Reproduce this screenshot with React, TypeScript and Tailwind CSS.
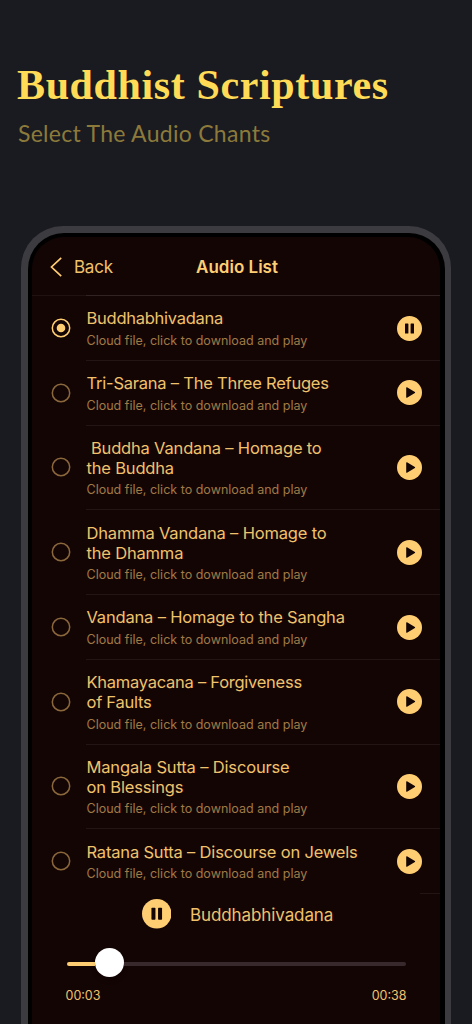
import React, { useState } from "react";

interface Track {
  id: number;
  lines: string[];
  spacing: string;
}

const tracks: Track[] = [
  { id: 1, lines: ["Buddhabhivadana"], spacing: "tracking-[-0.26px]" },
  { id: 2, lines: ["Tri-Sarana – The Three Refuges"], spacing: "tracking-[-0.22px]" },
  { id: 3, lines: ["\u00a0Buddha Vandana – Homage to", "the Buddha"], spacing: "tracking-[-0.18px]" },
  { id: 4, lines: ["Dhamma Vandana – Homage to", "the Dhamma"], spacing: "tracking-[-0.18px]" },
  { id: 5, lines: ["Vandana – Homage to the Sangha"], spacing: "tracking-[-0.18px]" },
  { id: 6, lines: ["Khamayacana – Forgiveness", "of Faults"], spacing: "tracking-[-0.26px]" },
  { id: 7, lines: ["Mangala Sutta – Discourse", "on Blessings"], spacing: "tracking-[-0.16px]" },
  { id: 8, lines: ["Ratana Sutta – Discourse on Jewels"], spacing: "tracking-[-0.18px]" },
];

const PlayIcon = () => (
  <svg viewBox="0 0 25 25" className="h-[25px] w-[25px]">
    <circle cx="12.5" cy="12.5" r="12.5" fill="#ffce73" />
    <path d="M9.2 7.8v9.4c0 .5.4.7.8.5l7.9-4.7c.4-.3.4-.8 0-1L10 7.3c-.4-.2-.8 0-.8.5z" fill="#140505" />
  </svg>
);

const PauseIcon = ({ className }: { className: string }) => (
  <svg viewBox="0 0 25 25" className={className}>
    <circle cx="12.5" cy="12.5" r="12.5" fill="#ffce73" />
    <rect x="8" y="7.5" width="3.4" height="10" rx="0.6" fill="#140505" />
    <rect x="13.6" y="7.5" width="3.4" height="10" rx="0.6" fill="#140505" />
  </svg>
);

const Radio = ({ checked }: { checked: boolean }) => (
  <svg viewBox="0 0 20 20" className="h-5 w-5" fill="none">
    <circle cx="10" cy="10" r="8.7" stroke={checked ? "#ffce73" : "#8a683b"} strokeWidth="1.5" />
    {checked && <circle cx="10" cy="10" r="4.3" fill="#ffce73" />}
  </svg>
);

const App: React.FC = () => {
  const [current, setCurrent] = useState(1);

  return (
    <div className="flex h-[1024px] w-[472px] flex-col overflow-hidden bg-[#1a1b20] font-['Inter',sans-serif]">
      <header className="h-[226px] shrink-0 pl-[17px] pt-[60px]">
        <h1 className="whitespace-nowrap font-['Liberation_Serif',serif] text-[42px] font-bold leading-[50px] tracking-[0.62px] text-[#ffdb56]">
          Buddhist Scriptures
        </h1>
        <p className="ml-px mt-[8px] whitespace-nowrap font-['Lato',sans-serif] text-[23px] leading-[30px] tracking-[0.28px] text-[#8c7a3b]">
          Select The Audio Chants
        </p>
      </header>

      <main className="ml-[21px] h-[798px] w-[430px] shrink-0 rounded-t-[42px] bg-[#3b3b40] px-[6.5px] pt-[6.5px]">
        <div className="h-full rounded-t-[36px] bg-black px-[4.5px] pt-[4.5px]">
          <div className="flex h-full flex-col overflow-hidden rounded-t-[32px] bg-[#140505]">
            <nav className="grid h-[58px] shrink-0 grid-cols-[1fr_auto_1fr] items-center pt-[2px] text-[17px] text-[#ffce73]">
              <button className="flex items-center gap-[11px] pl-[17px] text-[#f0c26c]">
                <svg viewBox="0 0 14 20" className="h-5 w-[14px]" fill="none" stroke="#ffce73" strokeWidth="1.7">
                  <path d="M12.2 .9 2.5 10l9.7 9.1" />
                </svg>
                <span className="pt-px tracking-[-0.25px]">Back</span>
              </button>
              <h2 className="pl-[2px] pt-px font-semibold tracking-[0px]">Audio List</h2>
            </nav>

            <ul className="h-[598px] shrink-0">
              {tracks.map((track, i) => (
                <li key={track.id} className="flex">
                  <div className={`flex w-[54px] items-center pl-[19px] pt-px ${i === 0 ? "border-t border-[#211212]" : ""}`}>
                    <button onClick={() => setCurrent(track.id)}>
                      <Radio checked={current === track.id} />
                    </button>
                  </div>
                  <div
                    className={`flex flex-1 items-center justify-between border-t pr-[18px] pt-[0.5px] ${
                      i === 0 ? "border-[#312323]" : "border-[#231515]"
                    } ${track.lines.length > 1 ? "h-[84.75px]" : "h-[64.75px]"}`}
                  >
                    <div className="whitespace-nowrap pl-[0.5px] pt-px">
                      <h3 className={`text-[16.5px] leading-5 text-[#f0c26c] ${track.spacing}`}>
                        {track.lines.map((line) => (
                          <span key={line} className="block">{line}</span>
                        ))}
                      </h3>
                      <p className="mt-[4.5px] text-[12.5px] leading-4 tracking-[0.01px] text-[#a07a45]">
                        Cloud file, click to download and play
                      </p>
                    </div>
                    <button onClick={() => setCurrent(track.id)}>
                      {current === track.id ? <PauseIcon className="h-[25px] w-[25px]" /> : <PlayIcon />}
                    </button>
                  </div>
                </li>
              ))}
            </ul>

            <section className="flex flex-1 flex-col">
              <div className="h-px w-5 self-end bg-[#231515]" />
              <div className="flex h-[40px] items-center gap-[19px] pl-[109.5px]">
                <PauseIcon className="h-[29.5px] w-[29.5px]" />
                <span className="pt-[3px] text-[17px] tracking-[-0.1px] text-[#f0c26c]">Buddhabhivadana</span>
              </div>
              <div className="mx-[34.5px] mt-[14px] flex h-[29px] items-center">
                <div className="mt-[2px] h-1 w-[28px] rounded-l-full bg-[#ffce73]" />
                <div className="h-[29px] w-[29px] rounded-full bg-white shadow-md" />
                <div className="mt-[2px] h-1 flex-1 rounded-r-full bg-[#382a2c]" />
              </div>
              <div className="mx-[33.5px] mt-[8.5px] flex justify-between text-[12.5px] leading-5 text-[#f0c26c]">
                <span>00:03</span>
                <span>00:38</span>
              </div>
            </section>
          </div>
        </div>
      </main>
    </div>
  );
};

export default App;
